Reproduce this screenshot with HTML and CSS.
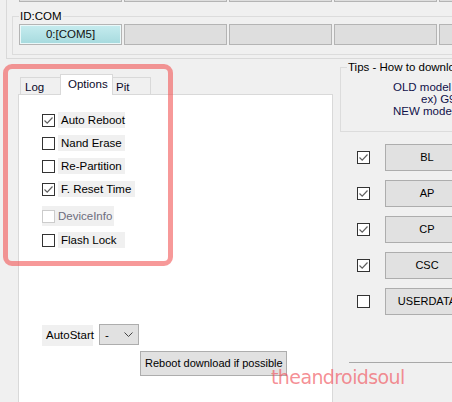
FILE: index.html
```html
<!DOCTYPE html>
<html lang="en">
<head>
  <meta charset="UTF-8" />
  <title>Odin Options</title>
  <link rel="stylesheet" href="styles.css">
</head>
<body>
<div class="app">

  <div class="frame">
    <div class="toprow">
      <span class="slot"></span><span class="slot"></span><span class="slot"></span><span class="slot"></span><span class="slot"></span>
    </div>
    <div class="group com-group">
      <span class="group-title">ID:COM</span>
      <div class="ports">
        <div class="port active">0:[COM5]</div>
        <div class="port"></div>
        <div class="port"></div>
        <div class="port"></div>
        <div class="port"></div>
      </div>
    </div>
  </div>

  <div class="main">
    <div class="left">
      <div class="tabs">
        <div class="tab tab-log">Log</div>
        <div class="tab tab-options selected">Options</div>
        <div class="tab tab-pit">Pit</div>
      </div>
      <div class="panel">
        <div class="opt">
          <span class="box"><svg width="11" height="11" viewBox="0 0 11 11"><path d="M1.5 5.5 L4.2 8.2 L9.5 2.5" /></svg></span>
          <span class="label">Auto Reboot</span>
        </div>
        <div class="opt">
          <span class="box"></span>
          <span class="label">Nand Erase</span>
        </div>
        <div class="opt">
          <span class="box"></span>
          <span class="label">Re-Partition</span>
        </div>
        <div class="opt">
          <span class="box"><svg width="11" height="11" viewBox="0 0 11 11"><path d="M1.5 5.5 L4.2 8.2 L9.5 2.5" /></svg></span>
          <span class="label wide">F. Reset Time</span>
        </div>
        <div class="opt disabled">
          <span class="box"></span>
          <span class="label">DeviceInfo</span>
        </div>
        <div class="opt">
          <span class="box"></span>
          <span class="label">Flash Lock</span>
        </div>

        <div class="autostart">
          <span class="as-label">AutoStart</span>
          <div class="select">
            <span>-</span>
            <svg width="9" height="5" viewBox="0 0 9 5"><polyline points="0.5,0.5 4.5,4.5 8.5,0.5" /></svg>
          </div>
        </div>
        <div class="reboot-btn">Reboot download if possible</div>
      </div>
    </div>

    <div class="right">
      <div class="group tips">
        <span class="group-title">Tips - How to download</span>
        <div class="tip-line old">OLD model <b>:</b></div>
        <div class="tip-line ex">ex) G9</div>
        <div class="tip-line">NEW model <b>:</b></div>
      </div>

      <div class="flash-list">
        <div class="flash-row">
          <span class="box"><svg width="11" height="11" viewBox="0 0 11 11"><path d="M1.5 5.5 L4.2 8.2 L9.5 2.5" /></svg></span>
          <div class="fbtn">BL</div>
        </div>
        <div class="flash-row">
          <span class="box"><svg width="11" height="11" viewBox="0 0 11 11"><path d="M1.5 5.5 L4.2 8.2 L9.5 2.5" /></svg></span>
          <div class="fbtn">AP</div>
        </div>
        <div class="flash-row">
          <span class="box"><svg width="11" height="11" viewBox="0 0 11 11"><path d="M1.5 5.5 L4.2 8.2 L9.5 2.5" /></svg></span>
          <div class="fbtn">CP</div>
        </div>
        <div class="flash-row">
          <span class="box"><svg width="11" height="11" viewBox="0 0 11 11"><path d="M1.5 5.5 L4.2 8.2 L9.5 2.5" /></svg></span>
          <div class="fbtn">CSC</div>
        </div>
        <div class="flash-row">
          <span class="box"></span>
          <div class="fbtn">USERDATA</div>
        </div>
      </div>
      <div class="separator"></div>
    </div>
  </div>

  <div class="highlight"></div>
  <div class="watermark">theandroidsoul</div>
</div>
</body>
</html>
```

FILE: styles.css
```css
* {
  box-sizing: border-box;
}

body {
  margin: 0;
  background: #f0f0f0;
  font-family: 'Liberation Sans', Arial, sans-serif;
  font-size: 11px;
  color: #000;
}

.app {
  position: relative;
  width: 452px;
  height: 402px;
  overflow: hidden;
}

/* top frame with COM ports */
.frame {
  margin-left: 6px;
  width: 600px;
  height: 59px;
  padding-left: 5px;
  border-left: 1px solid #d9d9d9;
  border-bottom: 1px solid #d9d9d9;
}

.toprow {
  display: flex;
  align-items: flex-end;
  gap: 2px;
  height: 2px;
  margin-left: 7px;
  overflow: hidden;
}

.slot {
  flex-shrink: 0;
  width: 103px;
  height: 20px;
  border: 1px solid #b4b4b4;
  background: #dedede;
}

.group {
  border: 1px solid #dcdcdc;
}

.group-title {
  display: block;
  width: fit-content;
  margin: -8px 0 0 6px;
  padding: 0 1px;
  line-height: 14px;
  background: #f0f0f0;
  font-size: 11.5px;
  white-space: nowrap;
}

.com-group {
  margin-top: 14px;
  width: 600px;
  height: 39px;
  padding-left: 6px;
}

.com-group .group-title {
  margin-left: 0;
}

.ports {
  display: flex;
  gap: 2px;
  margin-top: 1px;
}

.port {
  flex-shrink: 0;
  width: 103px;
  height: 21px;
  border: 1px solid #b4b4b4;
  background: #dedede;
  text-align: center;
  line-height: 19px;
  font-size: 11.5px;
}

.port.active {
  background: linear-gradient(#c6ecef, #a6dade);
  box-shadow: inset 0 0 0 1px #eaf8f9;
  color: #111;
}

/* main area */
.main {
  display: flex;
}

.left {
  margin-left: 18px;
  width: 315px;
  flex-shrink: 0;
}

.tabs {
  display: flex;
  align-items: flex-end;
  height: 20px;
  margin-top: 15px;
  padding-left: 2px;
}

.tab {
  height: 17px;
  border: 1px solid #d9d9d9;
  border-bottom: none;
  background: #f0f0f0;
  line-height: 18px;
  font-size: 11.5px;
  color: #0a0a2a;
}

.tab-log {
  width: 41px;
  padding-left: 4px;
}

.tab-options {
  width: 53px;
  margin-left: -1px;
  padding-left: 7px;
}

.tab-pit {
  width: 39px;
  margin-left: -1px;
  padding-left: 3px;
}

.tab.selected {
  position: relative;
  z-index: 1;
  height: 21px;
  margin-bottom: -1px;
  background: #fff;
  line-height: 19px;
}

.panel {
  height: 400px;
  border: 1px solid #d9d9d9;
  background: #fff;
  padding: 17px 0 0 23px;
}

.opt {
  display: flex;
  align-items: center;
  height: 16px;
  margin-bottom: 7px;
}

.box {
  flex-shrink: 0;
  display: flex;
  align-items: center;
  justify-content: center;
  width: 13px;
  height: 13px;
  border: 1px solid #333;
  background: #fff;
}

.box svg path {
  fill: none;
  stroke: #606060;
  stroke-width: 1.2;
}

.label {
  margin-left: 3px;
  width: 67px;
  height: 16px;
  padding-left: 3px;
  line-height: 16px;
  font-size: 11.5px;
  background: #f0f0f0;
  white-space: nowrap;
}

.label.wide {
  width: 77px;
}

.opt.disabled {
  width: 72px;
  height: 20px;
  margin-top: 9px;
  margin-bottom: 6px;
  background: #f0f0f0;
}

.opt.disabled .box {
  border-color: #cccccc;
}

.opt.disabled .label {
  background: none;
  padding-left: 0;
  color: #6d6d7d;
}

.autostart {
  display: flex;
  margin-top: 76px;
}

.as-label {
  width: 51px;
  height: 21px;
  margin-top: 1px;
  padding-left: 4px;
  line-height: 21px;
  font-size: 11.5px;
  background: #f0f0f0;
}

.select {
  display: flex;
  align-items: center;
  justify-content: space-between;
  width: 40px;
  height: 21px;
  margin-left: 6px;
  padding: 0 5px 0 5px;
  border: 1px solid #adadad;
  background: #e1e1e1;
  font-size: 11.5px;
}

.select polyline {
  fill: none;
  stroke: #444;
  stroke-width: 1;
}

.reboot-btn {
  width: 147px;
  height: 25px;
  margin: 5px 0 0 98px;
  padding-left: 4px;
  border: 1px solid #adadad;
  background: #e1e1e1;
  line-height: 23px;
  font-size: 11px;
  white-space: nowrap;
}

/* right column */
.right {
  margin-left: 7px;
  width: 200px;
  flex-shrink: 0;
}

.tips {
  margin-top: 8px;
  height: 65px;
  border-right: none;
}

.tips .group-title {
  margin: -7px 0 0 6px;
  line-height: 13px;
}

.tip-line {
  padding-left: 52px;
  line-height: 12px;
  font-size: 11.5px;
  color: #10104a;
  white-space: nowrap;
}

.tip-line b {
  font-weight: normal;
  color: #e0a020;
}

.tip-line.old {
  margin-top: 7px;
}

.tip-line.ex {
  padding-left: 80px;
}

.flash-list {
  display: flex;
  flex-direction: column;
  gap: 9px;
  margin-top: 12px;
}

.flash-row {
  display: flex;
  align-items: center;
  padding-left: 17px;
}

.fbtn {
  width: 84px;
  height: 27px;
  margin-left: 15px;
  border: 1px solid #adadad;
  background: #e1e1e1;
  text-align: center;
  line-height: 25px;
  font-size: 11px;
  white-space: nowrap;
}

.separator {
  margin: 47px 0 0 9px;
  border-top: 1px solid #a8a8a8;
}

/* overlays */
.highlight {
  position: absolute;
  left: 3px;
  top: 64px;
  width: 170px;
  height: 202px;
  border: 5px solid rgba(242, 85, 85, 0.6);
  border-radius: 9px;
}

.watermark {
  position: absolute;
  left: 271px;
  top: 366px;
  font-family: 'DejaVu Sans', sans-serif;
  font-size: 19px;
  letter-spacing: -0.6px;
  color: rgba(240, 80, 90, 0.65);
}
```
